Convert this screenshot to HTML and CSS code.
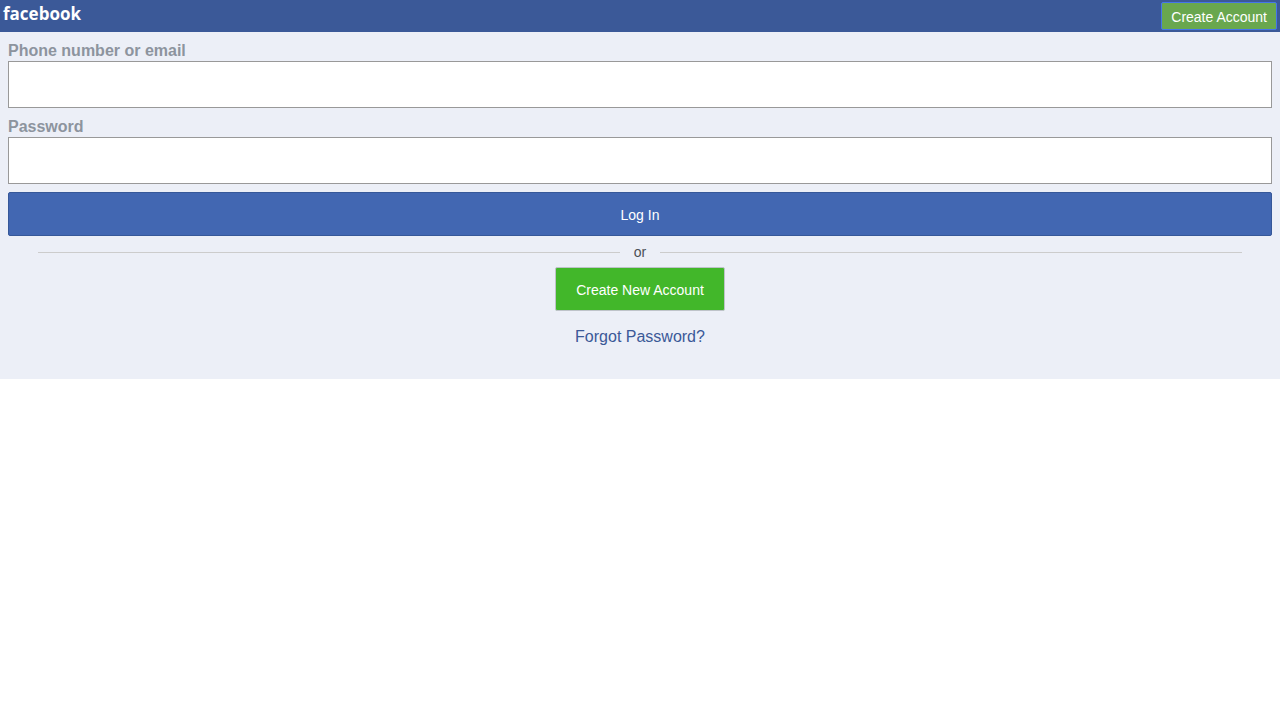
FILE: index.html
```html
<!DOCTYPE html>
<html lang="en">

<head>
    <meta charset="UTF-8">
    <meta name="viewport" content="width=device-width, initial-scale=1.0">
    <title>Log in to Facebook</title>
    <link rel="stylesheet" href="styles.css">
</head>

<body>
    <header class="header">
        <a class="logo" href="#">facebook</a>
        <button type="button" class="btn btn-header">Create Account</button>
    </header>

    <main class="login">
        <form class="login-form">
            <label for="email">Phone number or email</label>
            <input type="text" id="email" name="email">
            <label for="password">Password</label>
            <input type="password" id="password" name="password">
            <button type="submit" class="btn btn-login">Log In</button>
        </form>

        <div class="divider"><span>or</span></div>

        <button type="button" class="btn btn-create">Create New Account</button>
        <a class="forgot" href="#">Forgot Password?</a>
    </main>
</body>

</html>
```
FILE: styles.css
```css
* {
    box-sizing: border-box;
}

body {
    margin: 0;
    background-color: #fff;
    font-family: Helvetica, "Liberation Sans", Arial, sans-serif;
    font-size: 14px;
}

.header {
    display: flex;
    justify-content: space-between;
    align-items: center;
    height: 32px;
    padding: 0 3px;
    background-color: #3b5998;
}

.logo {
    padding-bottom: 4px;
    color: #fff;
    font-family: "Open Sans", sans-serif;
    font-size: 17px;
    font-weight: 700;
    line-height: 24px;
    text-decoration: none;
}

.btn {
    border: 1px solid;
    border-radius: 2px;
    color: #fff;
    font-family: inherit;
    font-size: 14px;
    cursor: pointer;
}

.btn-header {
    height: 28px;
    padding: 2px 9px 0;
    background-color: #69a74e;
    border-color: #4575ea;
}

.login {
    display: flex;
    flex-direction: column;
    align-items: center;
    padding: 8px 8px 32px;
    background-color: #eceff7;
}

.login-form {
    display: flex;
    flex-direction: column;
    width: 100%;
}

.login-form label {
    color: #8d949e;
    font-size: 16px;
    font-weight: bold;
    line-height: 21px;
}

.login-form input {
    height: 47px;
    margin-bottom: 8px;
    padding: 8px;
    background-color: #fff;
    border: 1px solid #999;
    border-radius: 0;
    font-size: 16px;
}

.btn-login {
    height: 44px;
    padding-top: 2px;
    background-color: #4267b2;
    border-color: #365899;
}

.divider {
    display: flex;
    align-items: center;
    gap: 14px;
    width: 100%;
    padding: 9px 30px 7px;
    color: #4b4f56;
    line-height: 15px;
}

.divider::before,
.divider::after {
    content: "";
    flex: 1;
    height: 1px;
    background-color: #ccc;
}

.btn-create {
    height: 44px;
    padding: 2px 20px 0;
    background-color: #42b72a;
    border-color: #bec3c9;
}

.forgot {
    margin-top: 16px;
    color: #3b5998;
    font-size: 16px;
    line-height: 20px;
    text-decoration: none;
}
```
